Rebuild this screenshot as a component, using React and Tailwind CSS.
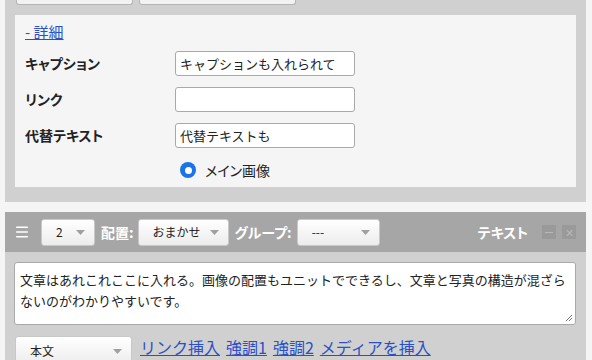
import { Menu } from 'lucide-react';

const jp = { fontFamily: '"Noto Sans CJK JP", "Noto Sans", sans-serif' };

function Caret() {
  return (
    <svg width="9" height="5" viewBox="0 0 9 5" className="shrink-0">
      <path d="M0 0h9L4.5 5z" fill="#a0a0a0" />
    </svg>
  );
}

function Select({ label, width, className = '' }) {
  return (
    <div
      className={`flex items-center justify-between h-[27px] rounded-[3px] border border-[#c8c8c8] bg-gradient-to-b from-white to-[#ececec] pl-[14px] pr-[9px] text-[12px] text-[#222] ${width} ${className}`}
    >
      <span>{label}</span>
      <Caret />
    </div>
  );
}

function Field({ label, value }) {
  return (
    <div className="flex items-center h-[25px]">
      <div className="w-[150px] text-[14px] font-bold text-[#222] [font-feature-settings:'palt']">{label}</div>
      <div className="w-[180px] h-[25px] overflow-hidden whitespace-nowrap rounded-[3px] border border-[#a9a9a9] bg-white px-[4px] text-[13px] leading-[23px] text-[#222]">
        {value}
      </div>
    </div>
  );
}

export default function App() {
  return (
    <div className="w-[592px] h-[360px] overflow-hidden bg-[#f5f5f5]" style={jp}>
      {/* Unit 1 (image) */}
      <div className="ml-[5px] w-[581px] bg-[#d0d0d0] pb-[15px]">
        <div className="flex gap-[6px] pl-[11px] h-[5px]">
          <div className="w-[117px] h-[5px] rounded-b-[3px] border-x border-b border-[#b5b5b5] bg-[#f2f2f2]" />
          <div className="w-[157px] h-[5px] rounded-b-[3px] border-x border-b border-[#b5b5b5] bg-[#f2f2f2]" />
        </div>
        <div className="mt-[10px] mx-[10px] bg-[#f5f5f5] pl-[10px] pt-[7px] pb-[7px]">
          <a className="block text-[15px] leading-[20px] text-[#2a50c8] underline">-&nbsp;詳細</a>
          <div className="mt-[9px] flex flex-col gap-[11px]">
            <Field label="キャプション" value="キャプションも入れられて" />
            <Field label="リンク" value="" />
            <Field label="代替テキスト" value="代替テキストも" />
          </div>
          <div className="mt-[12px] flex items-center h-[20px] pl-[155px]">
            <span className="w-[16px] h-[16px] rounded-full bg-[#1a73e8] flex items-center justify-center">
              <span className="w-[7px] h-[7px] rounded-full bg-white" />
            </span>
            <span className="ml-[9px] text-[14px] text-[#222] [font-feature-settings:'palt']">メイン画像</span>
          </div>
        </div>
      </div>

      {/* Unit 2 (text) */}
      <div className="ml-[5px] mt-[10px] w-[581px]">
        <div className="flex items-center h-[40px] bg-[#a6a6a6] pl-[9px] pr-[10px]">
          <Menu size={16} strokeWidth={2.2} className="text-white" />
          <Select label="2" width="w-[54px]" className="ml-[11px]" />
          <span className="ml-[6px] text-[14px] font-bold text-white [font-feature-settings:'palt']">配置:</span>
          <Select label="おまかせ" width="w-[91px]" className="ml-[4px]" />
          <span className="ml-[6px] text-[14px] font-bold text-white [font-feature-settings:'palt']">グループ:</span>
          <Select label="---" width="w-[83px]" className="ml-[5px]" />
          <span className="ml-auto text-[14px] font-bold text-white [font-feature-settings:'palt']">テキスト</span>
          <div className="ml-[14px] w-[14px] h-[14px] bg-[#9a9a9a] flex items-center justify-center">
            <span className="w-[8px] h-[1px] bg-[#b8b8b8]" />
          </div>
          <div className="ml-[6px] w-[14px] h-[14px] bg-[#9a9a9a] flex items-center justify-center text-[#b8b8b8] text-[11px] leading-none">
            ✕
          </div>
        </div>
        <div className="bg-[#d0d0d0] pl-[9px] pr-[10px] pt-[10px] h-[120px]">
          <div className="relative h-[63px] rounded-[3px] border border-[#a9a9a9] bg-white px-[5px] pt-[6px] text-[13px] leading-[21px] text-[#222] whitespace-nowrap">
            文章はあれこれここに入れる。画像の配置もユニットでできるし、文章と写真の構造が混ざら
            <br />
            ないのがわかりやすいです。
            <svg width="8" height="8" viewBox="0 0 8 8" className="absolute right-[2px] bottom-[2px]">
              <path d="M7 1L1 7M7 4L4 7" stroke="#777" strokeWidth="1" />
            </svg>
          </div>
          <div className="mt-[11px] flex items-start">
            <Select label="本文" width="w-[117px]" className="ml-[1px] h-[30px]" />
            <div className="ml-[8px] flex gap-[6px] text-[16px] leading-[20px] text-[#2a50c8] pt-[1px]">
              <a className="underline">リンク挿入</a>
              <a className="underline">強調1</a>
              <a className="underline">強調2</a>
              <a className="underline">メディアを挿入</a>
            </div>
          </div>
        </div>
      </div>
    </div>
  );
}
